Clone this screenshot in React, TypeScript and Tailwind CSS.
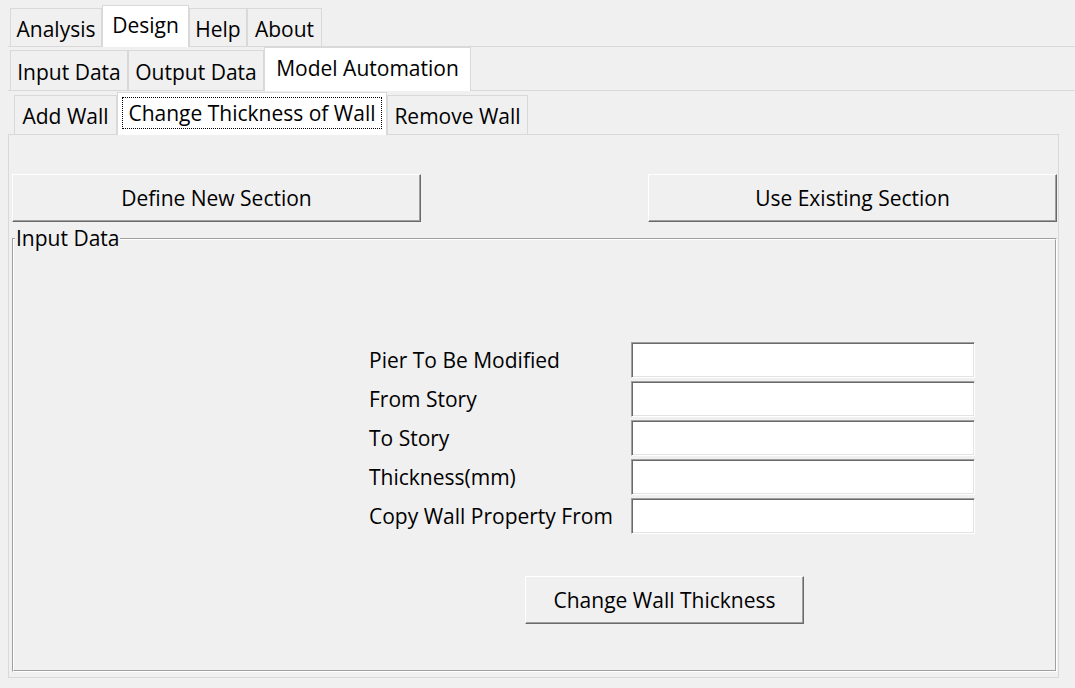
import type { ReactNode } from 'react';

interface TabDef {
  label: string;
  width: string;
}

const mainTabs: TabDef[] = [
  { label: 'Analysis', width: 'w-[92px]' },
  { label: 'Design', width: 'w-[87px]' },
  { label: 'Help', width: 'w-[58px]' },
  { label: 'About', width: 'w-[75px]' },
];

const designTabs: TabDef[] = [
  { label: 'Input Data', width: 'w-[118px]' },
  { label: 'Output Data', width: 'w-[136px]' },
  { label: 'Model Automation', width: 'w-[207px]' },
];

const automationTabs: TabDef[] = [
  { label: 'Add Wall', width: 'w-[103px]' },
  { label: 'Change Thickness of Wall', width: 'w-[270px]' },
  { label: 'Remove Wall', width: 'w-[141px]' },
];

const fields = [
  'Pier To Be Modified',
  'From Story',
  'To Story',
  'Thickness(mm)',
  'Copy Wall Property From',
];

function TabStrip({
  tabs,
  active,
  height,
  focused = false,
  className = '',
}: {
  tabs: TabDef[];
  active: number;
  height: string;
  focused?: boolean;
  className?: string;
}) {
  return (
    <div className={`flex items-end ${height} ${className}`}>
      {tabs.map((tab, i) => {
        const selected = i === active;
        return (
          <div
            key={tab.label}
            className={`${tab.width} flex items-center justify-center border border-b-0 border-[#d9d9d9] whitespace-nowrap ${
              selected
                ? 'relative z-10 -mb-px h-[calc(100%+1px)] bg-white pb-[3px]'
                : 'h-[calc(100%-3px)] bg-[#f0f0f0] pt-[2px]'
            }`}
          >
            {selected && focused ? (
              <span className="border border-dotted border-black px-[5px] leading-[30px]">
                {tab.label}
              </span>
            ) : (
              <span>{tab.label}</span>
            )}
          </div>
        );
      })}
    </div>
  );
}

// Raised Windows-classic push button
function RaisedButton({ children, className = '' }: { children: ReactNode; className?: string }) {
  return (
    <button
      type="button"
      className={`flex items-center justify-center border border-t-white border-l-white border-r-[#696969] border-b-[#696969] bg-[#f0f0f0] shadow-[inset_-1px_-1px_0_#a0a0a0] ${className}`}
    >
      {children}
    </button>
  );
}

// Sunken single-line entry
function Entry() {
  return (
    <input
      type="text"
      className="h-[36px] w-[344px] border border-t-[#a0a0a0] border-l-[#a0a0a0] border-r-white border-b-white bg-white px-1 shadow-[inset_1px_1px_0_#696969,inset_-1px_-1px_0_#e3e3e3] outline-none"
    />
  );
}

export default function App() {
  return (
    <div className="h-[688px] w-[1075px] overflow-hidden bg-[#f0f0f0] pl-[8px] pt-[5px] font-['Open_Sans',sans-serif] text-[21px] leading-[28px] text-black">
      <TabStrip tabs={mainTabs} active={1} height="h-[41px]" className="ml-[2px]" />
      <div className="border-t border-[#d9d9d9]">
        <TabStrip tabs={designTabs} active={2} height="h-[43px]" className="ml-[2px]" />
        <div className="border-t border-[#d9d9d9] pt-[1px]">
          <TabStrip
            tabs={automationTabs}
            active={1}
            focused
            height="h-[42px]"
            className="ml-[6px]"
          />
          <div className="w-[1051px] border border-[#d9d9d9] pb-[5px] pl-[3px] pr-[1px] pt-[39px]">
            <div className="flex justify-between">
              <RaisedButton className="h-[48px] w-[409px]">Define New Section</RaisedButton>
              <RaisedButton className="h-[48px] w-[409px]">Use Existing Section</RaisedButton>
            </div>

            {/* Input Data group box */}
            <div className="relative mt-[16px] h-[434px] border border-t-[#a0a0a0] border-l-[#a0a0a0] border-r-white border-b-white">
              <span className="absolute left-[2px] top-[-15px] bg-[#f0f0f0] pl-[1px] pr-[1px]">
                Input Data
              </span>
              <div className="h-full border border-t-white border-l-white border-r-[#a0a0a0] border-b-[#a0a0a0] pl-[355px] pt-[102px]">
                <div className="flex flex-col gap-[3px]">
                  {fields.map((f) => (
                    <div key={f} className="flex items-center">
                      <span className="w-[262px]">{f}</span>
                      <Entry />
                    </div>
                  ))}
                </div>
                <RaisedButton className="ml-[156px] mt-[42px] h-[48px] w-[279px]">
                  Change Wall Thickness
                </RaisedButton>
              </div>
            </div>
          </div>
        </div>
      </div>
    </div>
  );
}
